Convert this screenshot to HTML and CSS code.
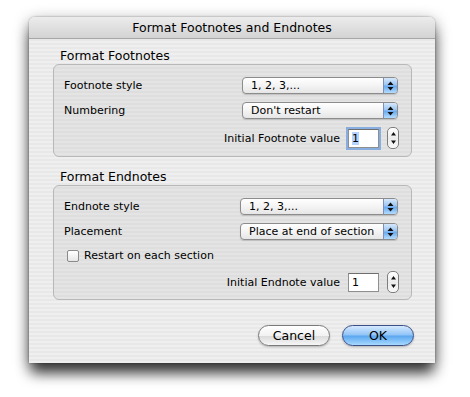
FILE: index.html
```html
<!DOCTYPE html>
<html lang="en">

<head>
    <meta charset="UTF-8">
    <meta name="viewport" content="width=device-width, initial-scale=1.0">
    <title>Format Footnotes and Endnotes</title>
    <link rel="stylesheet" href="styles.css">
</head>

<body>
    <div class="dialog">
        <div class="titleBar">Format Footnotes and Endnotes</div>
        <div class="dialogBody">
            <div class="groupTitle">Format Footnotes</div>
            <div class="groupBox boxFoot">
                <div class="row">
                    <span class="label">Footnote style</span>
                    <div class="popup">
                        <span class="popText">1, 2, 3,...</span>
                        <span class="popArrows">
                            <svg width="7" height="10" viewBox="0 0 7 10"><path d="M3.5 0.5 L6.5 4 L0.5 4 Z M0.5 6 L6.5 6 L3.5 9.5 Z" fill="#111"/></svg>
                        </span>
                    </div>
                </div>
                <div class="row">
                    <span class="label">Numbering</span>
                    <div class="popup">
                        <span class="popText">Don't restart</span>
                        <span class="popArrows">
                            <svg width="7" height="10" viewBox="0 0 7 10"><path d="M3.5 0.5 L6.5 4 L0.5 4 Z M0.5 6 L6.5 6 L3.5 9.5 Z" fill="#111"/></svg>
                        </span>
                    </div>
                </div>
                <div class="row rowRight">
                    <span class="label">Initial Footnote value</span>
                    <div class="numField focused"><span class="sel">1</span></div>
                    <div class="stepper">
                        <svg width="7" height="16" viewBox="0 0 7 16"><path d="M3.5 2 L6 5.5 L1 5.5 Z M1 10.5 L6 10.5 L3.5 14 Z" fill="#111"/></svg>
                    </div>
                </div>
            </div>

            <div class="groupTitle second">Format Endnotes</div>
            <div class="groupBox boxEnd">
                <div class="row">
                    <span class="label">Endnote style</span>
                    <div class="popup wide">
                        <span class="popText">1, 2, 3,...</span>
                        <span class="popArrows">
                            <svg width="7" height="10" viewBox="0 0 7 10"><path d="M3.5 0.5 L6.5 4 L0.5 4 Z M0.5 6 L6.5 6 L3.5 9.5 Z" fill="#111"/></svg>
                        </span>
                    </div>
                </div>
                <div class="row">
                    <span class="label">Placement</span>
                    <div class="popup wide">
                        <span class="popText">Place at end of section</span>
                        <span class="popArrows">
                            <svg width="7" height="10" viewBox="0 0 7 10"><path d="M3.5 0.5 L6.5 4 L0.5 4 Z M0.5 6 L6.5 6 L3.5 9.5 Z" fill="#111"/></svg>
                        </span>
                    </div>
                </div>
                <div class="checkRow">
                    <span class="checkbox"></span>
                    <span class="label">Restart on each section</span>
                </div>
                <div class="row rowRight">
                    <span class="label">Initial Endnote value</span>
                    <div class="numField"><span>1</span></div>
                    <div class="stepper">
                        <svg width="7" height="16" viewBox="0 0 7 16"><path d="M3.5 2 L6 5.5 L1 5.5 Z M1 10.5 L6 10.5 L3.5 14 Z" fill="#111"/></svg>
                    </div>
                </div>
            </div>

            <div class="btnArea">
                <button class="btn">Cancel</button>
                <button class="btn btnDefault">OK</button>
            </div>
        </div>
    </div>
</body>

</html>
```

FILE: styles.css
```css
html,
body {
    height: 100%;
}

body {
    margin: 0;
    padding-top: 17px;
    box-sizing: border-box;
    background-color: #ffffff;
    font-family: "DejaVu Sans", "Noto Sans", sans-serif;
    color: #000;
}

.dialog {
    margin: 0 0 0 29px;
    width: 406px;
    height: 346px;
    border-radius: 6px 6px 0 0;
    box-shadow: 0 12px 14px -2px rgba(0, 0, 0, 0.7),
        0 4px 16px rgba(0, 0, 0, 0.4),
        0 0 2px rgba(0, 0, 0, 0.4);
    overflow: hidden;
    background: repeating-linear-gradient(#efefef 0px, #efefef 2px, #e8e8e8 2px, #e8e8e8 4px);
}

.titleBar {
    height: 21px;
    line-height: 22px;
    text-align: center;
    font-size: 12.5px;
    background: linear-gradient(#ececec, #d3d3d3);
    border-bottom: 1px solid #a6a6a6;
}

.dialogBody {
    padding: 9px 23px 0 24px;
}

.groupTitle {
    font-size: 12.5px;
    line-height: 15px;
    padding-left: 7px;
    margin-bottom: 1px;
}

.groupTitle.second {
    margin-top: 12px;
}

.groupBox {
    box-sizing: border-box;
    border: 1px solid #b8b8b8;
    border-radius: 6px;
    background-color: rgba(0, 0, 0, 0.045);
    padding: 12px 13px 0 10px;
    display: flex;
    flex-direction: column;
    gap: 8px;
}

.boxFoot {
    height: 93px;
}

.boxEnd {
    height: 115px;
}

.row {
    display: flex;
    align-items: center;
    justify-content: space-between;
    height: 17px;
}

.rowRight {
    justify-content: flex-end;
    height: 22px;
}

.label {
    font-size: 11px;
}

.popup {
    box-sizing: border-box;
    width: 156px;
    height: 17px;
    border: 1px solid #8c8c8c;
    border-radius: 4px;
    background: linear-gradient(#ffffff, #f4f4f4 50%, #e6e6e6);
    display: flex;
    overflow: hidden;
    box-shadow: 0 1px 1px rgba(0, 0, 0, 0.15);
}

.popup.wide {
    width: 158px;
}

.popText {
    flex: 1;
    font-size: 11px;
    line-height: 15px;
    padding-left: 8px;
}

.popArrows {
    width: 13px;
    display: flex;
    align-items: center;
    justify-content: center;
    border-left: 1px solid #7b8fb8;
    background: linear-gradient(#d6e8fb, #9cc6f4 45%, #6aaaf0 55%, #b4dcfd);
}

.numField {
    box-sizing: border-box;
    width: 31px;
    height: 19px;
    margin-left: 8px;
    border: 1px solid #8f8f8f;
    border-top-color: #6e6e6e;
    background-color: #fff;
    font-size: 11px;
    line-height: 17px;
    padding-left: 3px;
}

.numField.focused {
    box-shadow: 0 0 0 2px #88aee0;
}

.sel {
    background-color: #b5d3fc;
}

.stepper {
    box-sizing: border-box;
    width: 12px;
    height: 22px;
    margin-left: 8px;
    margin-right: -1px;
    border: 1px solid #7e7e7e;
    border-radius: 5px;
    background: linear-gradient(#ffffff, #ececec 50%, #f8f8f8);
    display: flex;
    align-items: center;
    justify-content: center;
}

.checkRow {
    display: flex;
    align-items: center;
    height: 13px;
    margin-top: 1px;
    margin-bottom: 1px;
    padding-left: 3px;
}

.checkbox {
    box-sizing: border-box;
    width: 12px;
    height: 12px;
    border: 1px solid #8a8a8a;
    border-radius: 2px;
    background: linear-gradient(#ffffff, #e6e6e6);
    margin-right: 5px;
}

.btnArea {
    display: flex;
    justify-content: flex-end;
    gap: 12px;
    margin-top: 25px;
}

.btn {
    box-sizing: border-box;
    width: 72px;
    height: 21px;
    border-radius: 11px;
    border: 1px solid #7a7a7a;
    background: linear-gradient(#ffffff, #f2f2f2 50%, #dcdcdc 55%, #f6f6f6);
    font-family: "DejaVu Sans", sans-serif;
    font-size: 12.5px;
    padding: 0;
    box-shadow: 0 1px 2px rgba(0, 0, 0, 0.25);
}

.btnDefault {
    border-color: #3d4f86;
    background: linear-gradient(#d4e9ff, #8fc3f6 48%, #5aa6ef 52%, #a6d9ff);
    margin-right: -2px;
}
```
